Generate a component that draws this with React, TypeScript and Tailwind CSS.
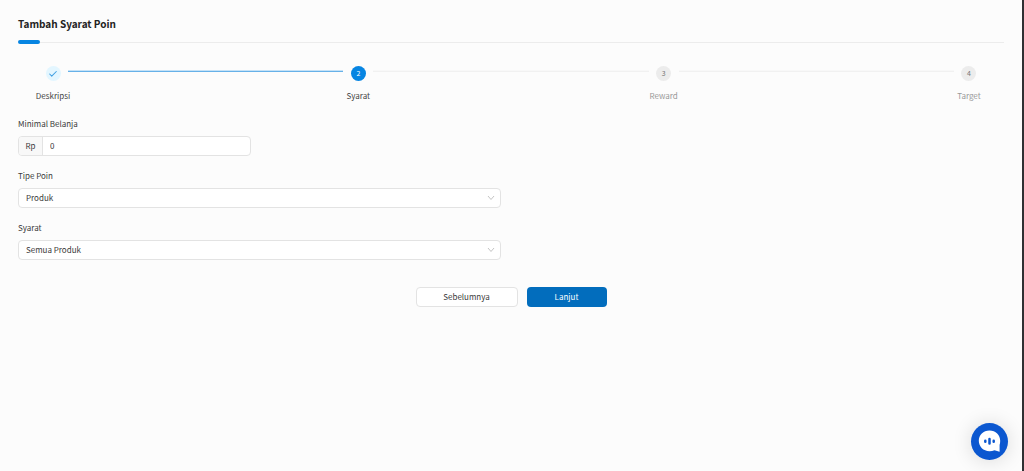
import { Check } from "lucide-react";

type StepStatus = "done" | "active" | "waiting";

const steps: { title: string; status: StepStatus }[] = [
  { title: "Deskripsi", status: "done" },
  { title: "Syarat", status: "active" },
  { title: "Reward", status: "waiting" },
  { title: "Target", status: "waiting" },
];

const circleStyles: Record<StepStatus, string> = {
  done: "bg-[#e3f6ff] text-[#3f9fe2]",
  active: "bg-[#0785e2] text-white",
  waiting: "bg-[#ececec] text-[#777777]",
};

function Steps() {
  return (
    <ol className="mt-[22px] flex pr-5 pl-5">
      {steps.map((step, i) => (
        <li
          key={step.title}
          className={i < steps.length - 1 ? "flex flex-1" : "flex"}
        >
          <div className="flex w-[30px] shrink-0 flex-col items-center">
            <span
              className={`flex size-[15px] items-center justify-center rounded-full text-[7px] leading-[15px] ${circleStyles[step.status]}`}
            >
              {step.status === "done" ? (
                <Check className="size-2.5" strokeWidth={2.5} />
              ) : (
                i + 1
              )}
            </span>
            <span
              className={`mt-[7px] text-[8px] leading-4 whitespace-nowrap ${step.status === "waiting" ? "text-[#999999]" : "text-[#444444]"}`}
            >
              {step.title}
            </span>
          </div>
          {i < steps.length - 1 && (
            <div
              className={`mt-1 h-0.5 flex-1 border-y ${step.status === "done" ? "border-t-[#c5e2f7] border-b-[#67b1e8]" : "border-t-[#f8f8f8] border-b-[#f1f1f1]"}`}
            />
          )}
        </li>
      ))}
    </ol>
  );
}

function SelectField({
  id,
  label,
  options,
}: {
  id: string;
  label: string;
  options: string[];
}) {
  return (
    <div className="mt-3 w-[49%]">
      <label htmlFor={id} className="block leading-4">
        {label}
      </label>
      <div className="mt-1 grid items-center">
        <select
          id={id}
          className="col-start-1 row-start-1 h-5 w-full appearance-none rounded border border-[#e3e3e3] bg-white px-[7px] outline-none focus:border-[#0785e2]"
        >
          {options.map((option) => (
            <option key={option}>{option}</option>
          ))}
        </select>
        <svg
          viewBox="0 0 8 8"
          className="pointer-events-none col-start-1 row-start-1 mr-[6px] size-2 justify-self-end"
          aria-hidden="true"
        >
          <path d="M1 2 4 5.5 7 2" fill="none" stroke="#c4c4c4" />
        </svg>
      </div>
    </div>
  );
}

function ChatButton() {
  return (
    <button
      type="button"
      aria-label="Chat"
      className="fixed right-4 bottom-[11px] size-[37px] rounded-full bg-[#0b57d0] shadow-[0_1px_20px_rgba(0,0,0,0.14)]"
    >
      <svg viewBox="0 0 37 37" className="size-full" aria-hidden="true">
        <path
          d="M18.5 7.500C12.300 7.500 7.800 12 7.800 17.800S12.300 28.200 18.500 28.200C20.300 28.200 22 27.900 23.500 27.200L28.600 28.800V22C29 20.800 29.200 19.500 29.200 17.800 29.200 12 24.700 7.500 18.500 7.500Z"
          fill="white"
        />
        <path
          d="M14.300 17.700v1M18.500 16v4.500M22.700 17.700v1"
          stroke="#0b57d0"
          strokeWidth="2.500"
          strokeLinecap="round"
        />
      </svg>
    </button>
  );
}

export default function App() {
  return (
    <div className="min-h-screen border-r-2 border-[#2f3033] bg-[#fcfcfc] font-['Noto_Sans_CJK_SC',sans-serif] text-[8px] text-[#3a3a3a]">
      <main className="pt-4 pr-[18px] pl-[18px]">
        <h1 className="text-[10px] leading-4 font-bold text-[#222222]">
          Tambah Syarat Poin
        </h1>
        <div className="mt-2 flex h-1 items-center">
          <div className="h-1 w-[22px] rounded-full bg-[#0785e2]" />
          <div className="h-px flex-1 bg-[#ececec]" />
        </div>
        <Steps />
        <form onSubmit={(e) => e.preventDefault()}>
          <div className="mt-3 w-[233px]">
            <label htmlFor="minimal-belanja" className="block leading-4">
              Minimal Belanja
            </label>
            <div className="mt-1 flex h-5 overflow-hidden rounded border border-[#e3e3e3] bg-white focus-within:border-[#0785e2]">
              <span className="flex w-6 items-center justify-center border-r border-[#e3e3e3] bg-[#f8f8f8]">
                Rp
              </span>
              <input
                id="minimal-belanja"
                type="text"
                inputMode="numeric"
                defaultValue="0"
                className="min-w-0 flex-1 px-[7px] outline-none"
              />
            </div>
          </div>
          <SelectField
            id="tipe-poin"
            label="Tipe Poin"
            options={["Produk", "Transaksi"]}
          />
          <SelectField
            id="syarat"
            label="Syarat"
            options={["Semua Produk", "Produk Tertentu"]}
          />
          <div className="mt-[27px] flex justify-center gap-[9px]">
            <button
              type="button"
              className="h-5 w-[102px] rounded border border-[#e3e3e3] bg-white"
            >
              Sebelumnya
            </button>
            <button
              type="submit"
              className="h-5 w-20 rounded bg-[#026dbd] text-white"
            >
              Lanjut
            </button>
          </div>
        </form>
      </main>
      <ChatButton />
    </div>
  );
}
